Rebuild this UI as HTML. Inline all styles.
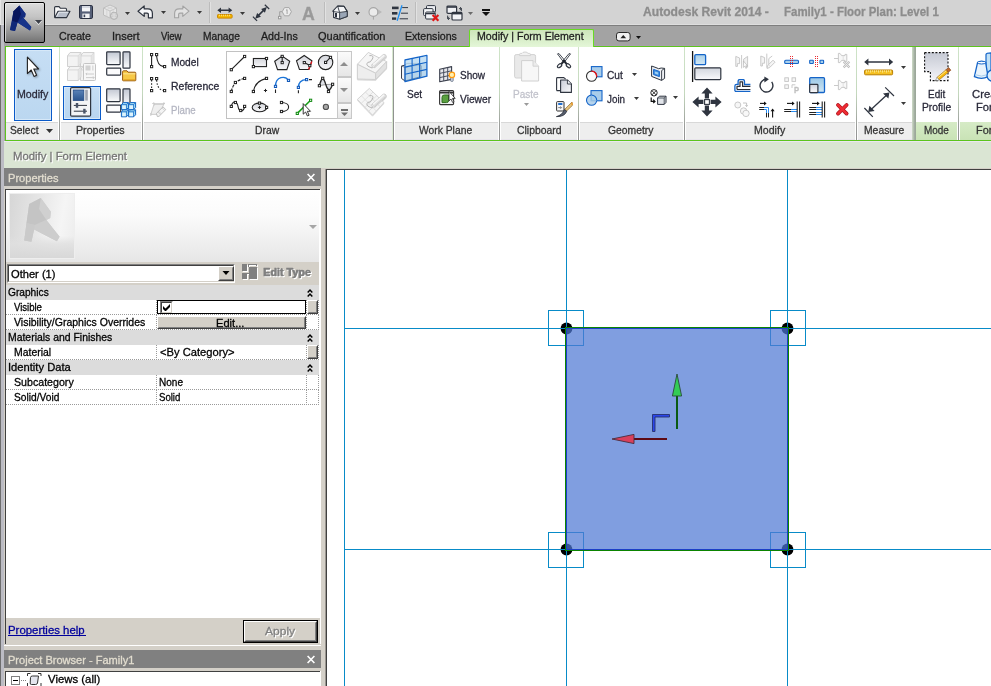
<!DOCTYPE html>
<html>
<head>
<meta charset="utf-8">
<title>Autodesk Revit 2014 - Family1 - Floor Plan: Level 1</title>
<style>
*{box-sizing:border-box;margin:0;padding:0}
html,body{width:991px;height:686px;overflow:hidden;background:#d4d0c8}
body{font-family:"Liberation Sans",sans-serif;font-size:12px;color:#1e1e1e;position:relative}
.a{position:absolute}
.t{position:absolute;white-space:nowrap;-webkit-text-stroke:0.3px currentColor}
svg{overflow:visible}
</style>
</head>
<body>
<div class="a" style="left:0px;top:0px;width:991px;height:25px;background:#d3d3d3;border-bottom:1px solid #dedede;"></div>
<div class="a" style="left:0px;top:25px;width:991px;height:21px;background:#a3a3a3;border-top:1px solid #7e7e7e;border-bottom:1px solid #aaa0ac;"></div>
<div class="a" style="left:0px;top:25px;width:1px;height:661px;background:#6e6e6e;"></div>
<div class="a" style="left:1px;top:25px;width:3px;height:661px;background:#bcbcc4;"></div>
<div class="a" style="left:0px;top:0px;width:1px;height:25px;background:#e6e6e6;"></div>
<div class="a" style="left:4px;top:46px;width:1px;height:96px;background:#a6a6a8;"></div>
<div class="a" style="left:5px;top:46px;width:990px;height:95px;background:#fff;border:1px solid #5cc41e;"></div>
<div class="a" style="left:4px;top:141px;width:987px;height:1px;background:#ebe8f0;"></div>
<div class="a" style="left:6px;top:122px;width:985px;height:18px;background:#eeeeee;border-top:1px solid #d8d8d8;border-bottom:1px solid #e8e4ec;"></div>
<div class="a" style="left:916px;top:122px;width:42px;height:18px;background:linear-gradient(#d6ebc6,#c9e3b6);"></div>
<div class="a" style="left:960px;top:122px;width:40px;height:18px;background:linear-gradient(#d6ebc6,#c9e3b6);"></div>
<div class="a" style="left:4px;top:142px;width:987px;height:26px;background:#dae5d3;"></div>
<div class="a" style="left:469px;top:29px;width:125px;height:18px;background:linear-gradient(#cde5ba 0%,#d8eec8 50%,#e4f6d8 100%);border:1px solid #68dc22;border-bottom:0;border-radius:2px 2px 0 0;"></div>
<div class="t" style="left:58.60px;top:29.00px;font-size:11.5px;line-height:15.5px;letter-spacing:0.000px;color:#1e1e1e;transform-origin:0 0;transform:scaleX(0.9257);">Create</div>
<div class="t" style="left:111.60px;top:29.00px;font-size:11.5px;line-height:15.5px;letter-spacing:0.000px;color:#1e1e1e;transform-origin:0 0;transform:scaleX(0.9600);">Insert</div>
<div class="t" style="left:161.00px;top:29.00px;font-size:11.5px;line-height:15.5px;letter-spacing:-0.079px;color:#1e1e1e;transform-origin:0 0;transform:scaleX(0.8400);">View</div>
<div class="t" style="left:203.00px;top:29.00px;font-size:11.5px;line-height:15.5px;letter-spacing:0.000px;color:#1e1e1e;transform-origin:0 0;transform:scaleX(0.8881);">Manage</div>
<div class="t" style="left:260.90px;top:29.00px;font-size:11.5px;line-height:15.5px;letter-spacing:0.000px;color:#1e1e1e;transform-origin:0 0;transform:scaleX(0.9275);">Add-Ins</div>
<div class="t" style="left:318.20px;top:29.00px;font-size:11.5px;line-height:15.5px;letter-spacing:0.000px;color:#1e1e1e;transform-origin:0 0;transform:scaleX(0.9600);">Quantification</div>
<div class="t" style="left:405.30px;top:29.00px;font-size:11.5px;line-height:15.5px;letter-spacing:0.000px;color:#1e1e1e;transform-origin:0 0;transform:scaleX(0.9214);">Extensions</div>
<div class="t" style="left:477.30px;top:29.00px;font-size:11.5px;line-height:15.5px;letter-spacing:0.000px;color:#1e1e1e;transform-origin:0 0;transform:scaleX(0.9233);">Modify | Form Element</div>
<div class="t" style="left:642.90px;top:4.00px;font-size:12.5px;line-height:16.5px;letter-spacing:0.000px;color:#8c8c8c;font-weight:bold;transform-origin:0 0;transform:scaleX(0.9685);">Autodesk Revit 2014 -</div>
<div class="t" style="left:784.30px;top:4.00px;font-size:12.5px;line-height:16.5px;letter-spacing:0.000px;color:#8c8c8c;font-weight:bold;transform-origin:0 0;transform:scaleX(0.9172);">Family1 - Floor Plan: Level 1</div>
<div class="a" style="left:58px;top:47px;width:3px;height:93px;background:#fff;"></div>
<div class="a" style="left:59px;top:47px;width:1px;height:93px;background:linear-gradient(#cfe4c8 0%,#c4d8bd 50%,#9a9c9a 85%,#929292 100%);"></div>
<div class="a" style="left:141px;top:47px;width:3px;height:93px;background:#fff;"></div>
<div class="a" style="left:142px;top:47px;width:1px;height:93px;background:linear-gradient(#cfe4c8 0%,#c4d8bd 50%,#9a9c9a 85%,#929292 100%);"></div>
<div class="a" style="left:498px;top:47px;width:3px;height:93px;background:#fff;"></div>
<div class="a" style="left:499px;top:47px;width:1px;height:93px;background:linear-gradient(#cfe4c8 0%,#c4d8bd 50%,#9a9c9a 85%,#929292 100%);"></div>
<div class="a" style="left:577px;top:47px;width:3px;height:93px;background:#fff;"></div>
<div class="a" style="left:578px;top:47px;width:1px;height:93px;background:linear-gradient(#cfe4c8 0%,#c4d8bd 50%,#9a9c9a 85%,#929292 100%);"></div>
<div class="a" style="left:683px;top:47px;width:3px;height:93px;background:#fff;"></div>
<div class="a" style="left:684px;top:47px;width:1px;height:93px;background:linear-gradient(#cfe4c8 0%,#c4d8bd 50%,#9a9c9a 85%,#929292 100%);"></div>
<div class="a" style="left:855px;top:47px;width:3px;height:93px;background:#fff;"></div>
<div class="a" style="left:856px;top:47px;width:1px;height:93px;background:linear-gradient(#cfe4c8 0%,#c4d8bd 50%,#9a9c9a 85%,#929292 100%);"></div>
<div class="a" style="left:957px;top:47px;width:3px;height:93px;background:#fff;"></div>
<div class="a" style="left:958px;top:47px;width:1px;height:93px;background:linear-gradient(#cfe4c8 0%,#c4d8bd 50%,#9a9c9a 85%,#929292 100%);"></div>
<div class="a" style="left:392px;top:47px;width:3px;height:93px;background:#fff;"></div>
<div class="a" style="left:393px;top:47px;width:1px;height:93px;background:linear-gradient(#9aa09a,#8c8c8c);"></div>
<div class="a" style="left:392px;top:47px;width:1px;height:93px;background:#d8e8d0;"></div>
<div class="a" style="left:912px;top:47px;width:4px;height:93px;background:linear-gradient(90deg,#cfdcc8,#a4b0a2 60%,#98a496);"></div>
<div class="t" style="left:10.30px;top:123.00px;font-size:11.5px;line-height:15.5px;letter-spacing:0.000px;color:#333;transform-origin:0 0;transform:scaleX(0.8909);">Select</div>
<div class="t" style="left:76.40px;top:123.00px;font-size:11.5px;line-height:15.5px;letter-spacing:0.000px;color:#333;transform-origin:0 0;transform:scaleX(0.9283);">Properties</div>
<div class="t" style="left:255.30px;top:123.00px;font-size:11.5px;line-height:15.5px;letter-spacing:0.000px;color:#333;transform-origin:0 0;transform:scaleX(0.9000);">Draw</div>
<div class="t" style="left:418.70px;top:123.00px;font-size:11.5px;line-height:15.5px;letter-spacing:0.000px;color:#333;transform-origin:0 0;transform:scaleX(0.8967);">Work Plane</div>
<div class="t" style="left:516.60px;top:123.00px;font-size:11.5px;line-height:15.5px;letter-spacing:0.000px;color:#333;transform-origin:0 0;transform:scaleX(0.9061);">Clipboard</div>
<div class="t" style="left:608.00px;top:123.00px;font-size:11.5px;line-height:15.5px;letter-spacing:0.000px;color:#333;transform-origin:0 0;transform:scaleX(0.9000);">Geometry</div>
<div class="t" style="left:753.70px;top:123.00px;font-size:11.5px;line-height:15.5px;letter-spacing:0.000px;color:#333;transform-origin:0 0;transform:scaleX(0.9206);">Modify</div>
<div class="t" style="left:863.50px;top:123.00px;font-size:11.5px;line-height:15.5px;letter-spacing:0.000px;color:#333;transform-origin:0 0;transform:scaleX(0.9000);">Measure</div>
<div class="t" style="left:923.70px;top:123.00px;font-size:11.5px;line-height:15.5px;letter-spacing:0.000px;color:#333;transform-origin:0 0;transform:scaleX(0.8655);">Mode</div>
<div class="t" style="left:975.50px;top:123.00px;font-size:11.5px;line-height:15.5px;letter-spacing:0.000px;color:#333;transform-origin:0 0;transform:scaleX(0.9444);">Form</div>
<svg class="a" style="left:46px;top:129px;" width="8" height="5" viewBox="0 0 8 5"><path d="M0 0h7l-3.5 4z" fill="#333"/></svg>
<div class="t" style="left:13.50px;top:150.00px;font-size:11.5px;line-height:15.5px;letter-spacing:0.000px;color:#fff;transform-origin:0 0;transform:scaleX(0.9871);">Modify | Form Element</div>
<div class="t" style="left:12.50px;top:149.00px;font-size:11.5px;line-height:15.5px;letter-spacing:0.000px;color:#757575;transform-origin:0 0;transform:scaleX(0.9871);">Modify | Form Element</div>
<div class="a" style="left:4px;top:2px;width:41px;height:41px;background:linear-gradient(#dcdcdc 0%,#c4c4c4 35%,#8e8e8e 80%,#747474 100%);border:1px solid #000;border-radius:2px;box-shadow:inset 1px 1px 0 #f0f0f0aa;"></div>
<svg class="a" style="left:4px;top:2px;" width="42" height="41" viewBox="0 0 42 41"><path d="M15.4 3.6L21.6 11.7L21 15.2L19 15.5L27.3 24.9L26 28.6L13.5 20.5L11 29L6 28L9.5 9.3z" fill="#122a7c"/><path d="M15.4 3.6L9.5 9.3L8 19L13.5 20.5L17 12z" fill="#08165c"/><path d="M15.4 3.6L21.6 11.7L21 15.2L19 15.5L17 12z" fill="#142d80"/><path d="M8 19L13.5 20.5L11 29L6 28z" fill="#102878"/><path d="M13.5 20.5L19 15.5L27.3 24.9L26 28.6z" fill="#17348a"/><path d="M31 19h7l-3.5 4z" fill="#f2f2f2"/><path d="M31 18h7l-3.5 4z" fill="#3c3f48"/></svg>
<svg class="a" style="left:54px;top:6px;" width="17" height="13" viewBox="0 0 17 13"><path d="M0.6 11.4V1.6q0-1 1-1H5l1.3 1.6h5.2q1 0 1 1V5" fill="#fafafa" stroke="#2f3540" stroke-width="1.1"/><path d="M0.8 11.6L4 5.2h12L12.6 11.6z" fill="#b9c0cc" stroke="#2f3540" stroke-width="1.1" stroke-linejoin="round"/><path d="M2.6 10.6L5 6.2h9.2" fill="none" stroke="#eef0f4" stroke-width="0.9"/></svg>
<svg class="a" style="left:79px;top:5px;" width="14" height="14" viewBox="0 0 14 14"><rect x="0.5" y="0.5" width="13" height="13" rx="1.3" fill="#566078" stroke="#2b3142"/><rect x="3" y="1" width="8" height="5.4" fill="#f4f5f8"/><rect x="3" y="1" width="8" height="2" fill="#d5d9e2"/><rect x="3.4" y="8.6" width="7.2" height="4.4" fill="#f2f3f6"/><rect x="4.6" y="9.6" width="1.6" height="2.6" fill="#3a4256"/></svg>
<svg class="a" style="left:102px;top:4px;" width="17" height="17" viewBox="0 0 17 17"><path d="M8 1L14.5 4V11L8 14L1.5 11V4z" fill="#e6e6e6" stroke="#bdbdbd"/><path d="M1.5 4L8 7L14.5 4M8 7V14" fill="none" stroke="#c4c4c4"/><path d="M4.7 2.5L11.2 5.5V12.4M11.3 2.5L4.8 5.5V12.4" fill="none" stroke="#d0d0d0" stroke-width=".8"/><circle cx="12" cy="11.8" r="3.6" fill="#c9c9c9" stroke="#b2b2b2"/><path d="M9 11.8h6M12 8.6v6.4M9.8 9.8q2.2 1.2 4.4 0M9.8 13.8q2.2-1.2 4.4 0" stroke="#e4e4e4" stroke-width=".7" fill="none"/></svg>
<svg class="a" style="left:125px;top:12px;" width="6" height="4" viewBox="0 0 6 4"><path d="M0 0h5l-2.5 3z" fill="#3a3a3a"/></svg>
<svg class="a" style="left:137px;top:5px;" width="17" height="14" viewBox="0 0 17 14"><path d="M1 6.2L7.2 1v2.9h3.6q4.6 0 4.6 4.6v4.3h-4V9.5q0-1.4-1.4-1.4H7.2V11.4z" fill="#f6f7f9" stroke="#2f3540" stroke-width="1.2" stroke-linejoin="round"/></svg>
<svg class="a" style="left:161px;top:11px;" width="6" height="4" viewBox="0 0 6 4"><path d="M0 0h5l-2.5 3z" fill="#3a3a3a"/></svg>
<svg class="a" style="left:173px;top:5px;" width="17" height="14" viewBox="0 0 17 14"><path d="M16 6.2L9.8 1v2.9H6.2q-4.6 0-4.6 4.6v4.3h4V9.5q0-1.4 1.4-1.4h2.8V11.4z" fill="#e2e2e2" stroke="#a4a4a4" stroke-width="1.1" stroke-linejoin="round"/></svg>
<svg class="a" style="left:197px;top:11px;" width="6" height="4" viewBox="0 0 6 4"><path d="M0 0h5l-2.5 3z" fill="#3a3a3a"/></svg>
<div class="a" style="left:209px;top:2px;width:1px;height:21px;background:#bcbcbc;"></div>
<div class="a" style="left:210px;top:2px;width:1px;height:21px;background:#e2e2e2;"></div>
<svg class="a" style="left:217px;top:6px;" width="16" height="13" viewBox="0 0 16 13"><path d="M0.3 4.3L4 1.6V3.6H11.6V1.6L15.3 4.3L11.6 7V5H4V7z" fill="#2f3540"/><rect x="0.5" y="8.5" width="14.6" height="3.6" rx="0.8" fill="#f5b800" stroke="#c98700"/><path d="M2.5 8.6v1.6M4.5 8.6v1.6M6.5 8.6v1.6M8.5 8.6v1.6M10.5 8.6v1.6M12.5 8.6v1.6" stroke="#fbe38a" stroke-width=".8"/></svg>
<svg class="a" style="left:240px;top:12px;" width="6" height="4" viewBox="0 0 6 4"><path d="M0 0h5l-2.5 3z" fill="#3a3a3a"/></svg>
<svg class="a" style="left:252px;top:4px;" width="18" height="18" viewBox="0 0 18 18"><path d="M5 12.9L13 4.9" stroke="#2f3540" stroke-width="1.6"/><path d="M3.20 14.65L8.93 12.76L5.13 8.93zM14.85 3.05L12.92 8.77L9.12 4.94z" fill="#2f3540"/><path d="M0.9 12.7L5.1 16.9M12.8 0.8L17.2 5" stroke="#2f3540" stroke-width="1.2"/></svg>
<svg class="a" style="left:278px;top:5px;" width="15" height="15" viewBox="0 0 15 15"><path d="M4.2 6.7L6.5 2.6H11.1L13.4 6.7L11.1 10.8H6.5z" fill="#ececec" stroke="#a8a8a8"/><path d="M8 5.4L9.1 4.6V9" stroke="#9c9c9c" stroke-width=".9" fill="none"/><path d="M4.2 6.7H1.7V11.4" stroke="#a0a0a0" fill="none"/><rect x="0.5" y="11.4" width="2.4" height="2.4" fill="#f4f4f4" stroke="#9a9a9a"/></svg>
<div class="t" style="left:302.20px;top:3.00px;font-size:18px;line-height:22px;letter-spacing:0.000px;color:#9a9a9a;font-weight:bold;transform-origin:0 0;transform:scaleX(0.9846);">A</div>
<div class="a" style="left:324px;top:2px;width:1px;height:21px;background:#bcbcbc;"></div>
<div class="a" style="left:325px;top:2px;width:1px;height:21px;background:#e2e2e2;"></div>
<svg class="a" style="left:332px;top:5px;" width="16" height="15" viewBox="0 0 16 15"><path d="M0.8 6.2L5.6 1L12 1.2L15.2 6.4V11.4L7.6 14.2L1.6 12.4V6.6z" fill="#f4f5f7" stroke="#2f3540" stroke-width="1.1" stroke-linejoin="round"/><path d="M7.6 7.4L15.2 6.4V11.4L7.6 14.2z" fill="#9aa6b6" stroke="#2f3540" stroke-width=".9"/><path d="M5.6 1L7.6 7.4L1.2 6.6M5.6 1L12 1.2L15.2 6.4" fill="none" stroke="#2f3540" stroke-width=".9"/><path d="M3 8h2v4.6l-2-.6z" fill="#2f3540"/></svg>
<svg class="a" style="left:355px;top:12px;" width="6" height="4" viewBox="0 0 6 4"><path d="M0 0h5l-2.5 3z" fill="#3a3a3a"/></svg>
<svg class="a" style="left:368px;top:6px;" width="15" height="15" viewBox="0 0 15 15"><path d="M8.6 2.4L14 6L8.6 9.6z" fill="#b9b9b9"/><circle cx="5.4" cy="6" r="4.4" fill="#ebebeb" stroke="#a6a6a6" stroke-width="1.1"/><path d="M5.4 10.4V13.6" stroke="#a6a6a6"/></svg>
<svg class="a" style="left:391px;top:5px;" width="18" height="16" viewBox="0 0 18 16"><rect x="1" y="1.6" width="6.6" height="2.6" fill="#2f3540"/><rect x="1" y="7" width="5.4" height="2.6" fill="#2f3540"/><rect x="1" y="12.4" width="4.2" height="2.4" fill="#2f3540"/><path d="M11.2 2.6H17M10 8.2H17M8.6 13.8H17" stroke="#2f3540" stroke-width="1"/><path d="M11 0.2L6.2 15.8" stroke="#1b8ef2" stroke-width="1.3"/></svg>
<div class="a" style="left:415px;top:2px;width:1px;height:21px;background:#bcbcbc;"></div>
<div class="a" style="left:416px;top:2px;width:1px;height:21px;background:#e2e2e2;"></div>
<svg class="a" style="left:423px;top:5px;" width="17" height="17" viewBox="0 0 17 17"><rect x="3.5" y="0.6" width="9" height="6.4" rx="1" fill="#eceef2" stroke="#2f3540"/><rect x="0.6" y="3.6" width="9.4" height="7" rx="1" fill="#f4f5f8" stroke="#2f3540"/><rect x="2.6" y="7" width="9.6" height="7" rx="1" fill="#f2f3f6" stroke="#2f3540"/><path d="M3 8.6h9" stroke="#2f3540" stroke-width="1.4"/><path d="M9.6 10L15.4 15.8M15.4 10L9.6 15.8" stroke="#e01818" stroke-width="2.2"/></svg>
<svg class="a" style="left:446px;top:5px;" width="18" height="16" viewBox="0 0 18 16"><rect x="1" y="1" width="9.6" height="7.4" rx="1" fill="#f0f1f4" stroke="#2f3540" stroke-width="1.2"/><path d="M1 2h9.6" stroke="#2f3540" stroke-width="1.6"/><rect x="6" y="7.4" width="10" height="7.6" rx="1" fill="#f4f5f8" stroke="#2f3540" stroke-width="1.2"/><path d="M6 8.6h10" stroke="#2f3540" stroke-width="1.6"/><path d="M13 3.6h2.4v2.6M14.2 2l1.2 1.6L14.2 5.2" fill="none" stroke="#2f3540" stroke-width=".9"/><path d="M4 13.4H1.6V10.6M2.8 15L1.6 13.4L2.8 11.8" fill="none" stroke="#2f3540" stroke-width=".9"/></svg>
<svg class="a" style="left:468px;top:12px;" width="6" height="4" viewBox="0 0 6 4"><path d="M0 0h5l-2.5 3z" fill="#6a6a6a"/></svg>
<div class="a" style="left:482px;top:9px;width:8px;height:2px;background:#111;"></div>
<svg class="a" style="left:482px;top:12px;" width="8" height="4" viewBox="0 0 8 4"><path d="M0 0h8l-4 4z" fill="#111"/></svg>
<svg class="a" style="left:616px;top:32px;" width="15" height="10" viewBox="0 0 15 10"><rect x="0.5" y="0.5" width="13.6" height="8.4" rx="2.4" fill="#f0f0f0" stroke="#2a2a2a"/><path d="M4.4 6.2h5.8l-2.9-3.2z" fill="#222"/></svg>
<svg class="a" style="left:636px;top:36px;" width="5" height="3" viewBox="0 0 5 3"><path d="M0 0h5l-2.5 3z" fill="#111"/></svg>
<div class="a" style="left:14px;top:49px;width:38px;height:72px;background:linear-gradient(#c6def4,#bbd7f0);border:1px solid #0a5ac8;box-shadow:inset 0 0 0 1px #d6e8f8;"></div>
<svg class="a" style="left:26px;top:56px;filter:drop-shadow(1px 1px 1px #0005);" width="14" height="22" viewBox="0 0 14 22"><path d="M1.4 1.2V17.6L5.2 14L8 20.4L10.6 19.2L7.8 13H12.6z" fill="#fff" stroke="#222" stroke-width="1.1" stroke-linejoin="round"/></svg>
<div class="t" style="left:16.60px;top:87.00px;font-size:11.5px;line-height:15.5px;letter-spacing:0.000px;color:#2a2a3a;transform-origin:0 0;transform:scaleX(0.9235);">Modify</div>
<svg class="a" style="left:67px;top:52px;" width="30" height="30" viewBox="0 0 30 30"><g transform="translate(13.5,0.5)"><path d="M0 3.4L2.6 0H13.4V10.6L10.8 14H0z" fill="#f3f3f3" stroke="#cccccc" stroke-width=".9"/><path d="M0 3.4H10.8V14M10.8 3.4L13.4 0" fill="none" stroke="#d2d2d2" stroke-width=".8"/><path d="M11.2 3.6L13 1.2V10.4L11.2 13z" fill="#e4e4e4"/></g><g transform="translate(0.5,0.5)"><path d="M0 3.4L2.6 0H13.4V10.6L10.8 14H0z" fill="#f3f3f3" stroke="#cccccc" stroke-width=".9"/><path d="M0 3.4H10.8V14M10.8 3.4L13.4 0" fill="none" stroke="#d2d2d2" stroke-width=".8"/><path d="M11.2 3.6L13 1.2V10.4L11.2 13z" fill="#e4e4e4"/></g><g transform="translate(13.5,14.5)"><path d="M0 3.4L2.6 0H13.4V10.6L10.8 14H0z" fill="#f3f3f3" stroke="#cccccc" stroke-width=".9"/><path d="M0 3.4H10.8V14M10.8 3.4L13.4 0" fill="none" stroke="#d2d2d2" stroke-width=".8"/><path d="M11.2 3.6L13 1.2V10.4L11.2 13z" fill="#e4e4e4"/></g><g transform="translate(0.5,14.5)"><path d="M0 3.4L2.6 0H13.4V10.6L10.8 14H0z" fill="#f3f3f3" stroke="#cccccc" stroke-width=".9"/><path d="M0 3.4H10.8V14M10.8 3.4L13.4 0" fill="none" stroke="#d2d2d2" stroke-width=".8"/><path d="M11.2 3.6L13 1.2V10.4L11.2 13z" fill="#e4e4e4"/></g><rect x="16.5" y="11.5" width="12" height="17" rx="1" fill="#f7f7f7" stroke="#c4c4c4"/><rect x="18.5" y="13.5" width="5" height="5" fill="#d2d2d2"/><rect x="25" y="13.5" width="1.6" height="5" fill="#dcdcdc"/><path d="M19 22h8M19 25.6h8" stroke="#c6c6c6" stroke-width=".9"/><path d="M20 20.8L18.8 22L20 23.2M26 24.4L27.2 25.6L26 26.8" stroke="#c0c0c0" fill="none" stroke-width=".8"/></svg>
<svg class="a" style="left:106px;top:51px;" width="31" height="31" viewBox="0 0 31 31"><defs><linearGradient id="pg" x1="0" y1="0" x2="0" y2="1"><stop offset="0" stop-color="#c2c7d2"/><stop offset="1" stop-color="#fafbfc"/></linearGradient></defs><rect x="17" y="0.8" width="7" height="16.4" rx=".8" fill="url(#pg)" stroke="#2f3540" stroke-width="1.2"/><rect x="0.7" y="0.8" width="13.4" height="12.8" rx=".8" fill="url(#pg)" stroke="#2f3540" stroke-width="1.2"/><rect x="0.7" y="17.2" width="14" height="6.9" rx=".8" fill="#fbfbfc" stroke="#2f3540" stroke-width="1.2"/><path d="M16.6 29.2V20.6q0-.8.8-.8h3.6l1 1.4h7q.8 0 .8.8V29.2q0 .6-.8.6H17.4q-.8 0-.8-.6z" fill="#f7c948" stroke="#9a5a10" stroke-width="1"/><path d="M17.2 22.8H29.4" stroke="#fbe28c" stroke-width="1.2"/><path d="M17.4 28.8H29.2" stroke="#e0a020" stroke-width="1"/></svg>
<div class="a" style="left:63px;top:86px;width:38px;height:34px;background:linear-gradient(#c6def4,#b8d5f0);border:1px solid #0a5ac8;box-shadow:inset 0 0 0 1px #d6e8f8;"></div>
<svg class="a" style="left:70px;top:87px;" width="22" height="30" viewBox="0 0 22 30"><rect x="0.6" y="0.6" width="20" height="28.6" rx="1.2" fill="#f3f4f6" stroke="#2f3540" stroke-width="1.2"/><defs><linearGradient id="bq" x1="0" y1="0" x2="0" y2="1"><stop offset="0" stop-color="#5b83b8"/><stop offset="1" stop-color="#2c558f"/></linearGradient></defs><rect x="3.2" y="3" width="10.6" height="10.4" fill="url(#bq)" stroke="#244a84" stroke-width=".8"/><rect x="15.2" y="2.8" width="2.6" height="10.8" fill="#a0a5b0"/><path d="M3.8 18.4H17M3.8 24.2H17" stroke="#2f3540" stroke-width="1"/><rect x="5.8" y="16" width="2.4" height="4.8" fill="#4a5468"/><rect x="13.2" y="21.8" width="2.4" height="4.8" fill="#4a5468"/></svg>
<svg class="a" style="left:106px;top:88px;" width="31" height="31" viewBox="0 0 31 31"><defs><linearGradient id="pg" x1="0" y1="0" x2="0" y2="1"><stop offset="0" stop-color="#c2c7d2"/><stop offset="1" stop-color="#fafbfc"/></linearGradient></defs><rect x="17" y="0.8" width="7" height="16.4" rx=".8" fill="url(#pg)" stroke="#2f3540" stroke-width="1.2"/><rect x="0.7" y="0.8" width="13.4" height="12.8" rx=".8" fill="url(#pg)" stroke="#2f3540" stroke-width="1.2"/><rect x="0.7" y="17.2" width="14" height="6.9" rx=".8" fill="#fbfbfc" stroke="#2f3540" stroke-width="1.2"/><g transform="translate(22.6,14.6)"><path d="M0 2L2 0H7V5L5 7H0z" fill="#a6def6" stroke="#1266c4" stroke-width="1"/><path d="M0 2H5V7M5 2L7 0" fill="none" stroke="#1266c4" stroke-width=".8"/><path d="M1 3h3.4v3.4H1z" fill="#dff3fc"/></g><g transform="translate(15.4,14.6)"><path d="M0 2L2 0H7V5L5 7H0z" fill="#a6def6" stroke="#1266c4" stroke-width="1"/><path d="M0 2H5V7M5 2L7 0" fill="none" stroke="#1266c4" stroke-width=".8"/><path d="M1 3h3.4v3.4H1z" fill="#dff3fc"/></g><g transform="translate(22.6,21.8)"><path d="M0 2L2 0H7V5L5 7H0z" fill="#a6def6" stroke="#1266c4" stroke-width="1"/><path d="M0 2H5V7M5 2L7 0" fill="none" stroke="#1266c4" stroke-width=".8"/><path d="M1 3h3.4v3.4H1z" fill="#dff3fc"/></g><g transform="translate(15.4,21.8)"><path d="M0 2L2 0H7V5L5 7H0z" fill="#a6def6" stroke="#1266c4" stroke-width="1"/><path d="M0 2H5V7M5 2L7 0" fill="none" stroke="#1266c4" stroke-width=".8"/><path d="M1 3h3.4v3.4H1z" fill="#dff3fc"/></g></svg>
<svg class="a" style="left:150px;top:53px;" width="17" height="16" viewBox="0 0 17 16"><path d="M1.6 3V13" stroke="#222" stroke-width="1.1"/><path d="M6.6 3Q7.4 12.6 13 13.4" fill="none" stroke="#222" stroke-width="1.1"/><rect x="0.50" y="0.50" width="2.2" height="2.2" fill="#fff" stroke="#222" stroke-width="1"/><rect x="0.50" y="12.50" width="2.2" height="2.2" fill="#fff" stroke="#222" stroke-width="1"/><rect x="5.50" y="0.50" width="2.2" height="2.2" fill="#fff" stroke="#222" stroke-width="1"/><rect x="13.50" y="12.50" width="2.2" height="2.2" fill="#fff" stroke="#222" stroke-width="1"/></svg>
<div class="t" style="left:170.80px;top:55.00px;font-size:11.5px;line-height:15.5px;letter-spacing:0.000px;color:#2a2a3a;transform-origin:0 0;transform:scaleX(0.8839);">Model</div>
<svg class="a" style="left:150px;top:77px;" width="17" height="16" viewBox="0 0 17 16"><path d="M1.6 3V13" stroke="#222" stroke-width="1.1" stroke-dasharray="1.6 1.6"/><path d="M6.6 3Q7.4 12.6 13 13.4" fill="none" stroke="#222" stroke-width="1.1" stroke-dasharray="1.6 1.6"/><rect x="0.50" y="0.50" width="2.2" height="2.2" fill="#fff" stroke="#222" stroke-width="1"/><rect x="0.50" y="12.50" width="2.2" height="2.2" fill="#fff" stroke="#222" stroke-width="1"/><rect x="5.50" y="0.50" width="2.2" height="2.2" fill="#fff" stroke="#222" stroke-width="1"/><rect x="13.50" y="12.50" width="2.2" height="2.2" fill="#fff" stroke="#222" stroke-width="1"/></svg>
<div class="t" style="left:170.80px;top:79.00px;font-size:11.5px;line-height:15.5px;letter-spacing:0.000px;color:#2a2a3a;transform-origin:0 0;transform:scaleX(0.9111);">Reference</div>
<svg class="a" style="left:150px;top:102px;" width="17" height="16" viewBox="0 0 17 16"><path d="M4 2.4H13.6L10 12.4H0.8z" fill="#efefef" stroke="#c8c8c8" stroke-width=".9"/><path d="M4 0.6V3.6M13.6 0.6V3M0.8 11v3M2.6 1.6H15M2.4 1.6l1.2-.9M15 1.6l-1.2-.9" stroke="#c4c4c4" stroke-width=".8" fill="none"/><path d="M7.4 14.6L6.4 11.4L13 4.8L15.8 7.6L9.2 14.2z" fill="#f4f4f4" stroke="#b8b8b8" stroke-width=".9"/><path d="M7.8 10L10.6 12.8M8.6 9.2L11.4 12M12 5.8L14.8 8.6" stroke="#c4c4c4" stroke-width=".7"/></svg>
<div class="t" style="left:170.80px;top:103.00px;font-size:11.5px;line-height:15.5px;letter-spacing:-0.000px;color:#b4b6c2;transform-origin:0 0;transform:scaleX(0.8400);">Plane</div>
<div class="a" style="left:226px;top:51px;width:126px;height:68px;background:#fff;border:1px solid #c2c2c2;"></div>
<svg class="a" style="left:226px;top:51px;" width="126" height="68" viewBox="0 0 126 68"><path d="M5.30 18.70L18.60 5.50" fill="none" stroke="#222" stroke-width="1.1" /><rect x="4.20" y="17.60" width="2.2" height="2.2" fill="#fff" stroke="#222" stroke-width="1"/><rect x="17.50" y="4.40" width="2.2" height="2.2" fill="#fff" stroke="#222" stroke-width="1"/><defs><linearGradient id="rg" x1="0" y1="0" x2="0" y2="1"><stop offset="0" stop-color="#d4d6dc"/><stop offset="1" stop-color="#f6f6f8"/></linearGradient></defs><rect x="27.400000000000006" y="7.5" width="13.1" height="8.1" fill="url(#rg)" stroke="#222" stroke-width="1.1"/><rect x="26.30" y="14.50" width="2.2" height="2.2" fill="#fff" stroke="#222" stroke-width="1"/><rect x="39.40" y="6.40" width="2.2" height="2.2" fill="#fff" stroke="#222" stroke-width="1"/><path d="M56.20 5.09L63.71 10.28L60.84 18.67L51.56 18.67L48.69 10.28z" fill="url(#rg)" stroke="#222" stroke-width="1.1"/><path d="M56.20 5.40L56.20 11.60" fill="none" stroke="#222" stroke-width="1.1" /><rect x="55.10" y="4.30" width="2.2" height="2.2" fill="#fff" stroke="#222" stroke-width="1"/><rect x="55.10" y="10.50" width="2.2" height="2.2" fill="#fff" stroke="#222" stroke-width="1"/><path d="M78.20 4.51L85.90 9.82L82.96 18.43L73.44 18.43L70.50 9.82z" fill="url(#rg)" stroke="#222" stroke-width="1.1"/><path d="M85.80 10.60L82.60 18.60" fill="none" stroke="#e8141c" stroke-width="1.3" /><path d="M78.30 11.60L83.80 14.60" fill="none" stroke="#222" stroke-width="1.1" /><rect x="77.20" y="10.50" width="2.2" height="2.2" fill="#fff" stroke="#222" stroke-width="1"/><rect x="82.70" y="13.50" width="2.2" height="2.2" fill="#fff" stroke="#222" stroke-width="1"/><circle cx="99.60000000000002" cy="11.399999999999999" r="7.2" fill="url(#rg)" stroke="#222" stroke-width="1.1"/><path d="M99.60 11.40L104.50 6.40" fill="none" stroke="#222" stroke-width="1.1" /><rect x="98.50" y="10.30" width="2.2" height="2.2" fill="#fff" stroke="#222" stroke-width="1"/><rect x="103.40" y="5.30" width="2.2" height="2.2" fill="#fff" stroke="#222" stroke-width="1"/><path d="M5.30 40.50Q7.60 29.40 18.60 27.40" fill="none" stroke="#222" stroke-width="1.1" stroke-dasharray="3 1.2"/><rect x="4.20" y="39.40" width="2.2" height="2.2" fill="#fff" stroke="#222" stroke-width="1"/><rect x="8.30" y="30.40" width="2.2" height="2.2" fill="#fff" stroke="#222" stroke-width="1"/><rect x="17.50" y="26.30" width="2.2" height="2.2" fill="#fff" stroke="#222" stroke-width="1"/><path d="M27.40 40.50Q29.00 30.00 40.50 27.40" fill="none" stroke="#222" stroke-width="1.1" /><rect x="26.30" y="39.40" width="2.2" height="2.2" fill="#fff" stroke="#222" stroke-width="1"/><rect x="39.40" y="26.30" width="2.2" height="2.2" fill="#fff" stroke="#222" stroke-width="1"/><path d="M37.90 39.50H41.10000000000002M39.50 37.90V41.099999999999994" fill="none" stroke="#222" stroke-width="1" /><path d="M49.50 35.40C49.50 25.00 59.50 24.60 62.50 29.40" fill="none" stroke="#1a74d8" stroke-width="1.3" /><rect x="48.40" y="34.30" width="2.2" height="2.2" fill="#cfe4fa" stroke="#1258b8" stroke-width="1"/><rect x="61.40" y="28.30" width="2.2" height="2.2" fill="#cfe4fa" stroke="#1258b8" stroke-width="1"/><path d="M49.50 38.40V42" fill="none" stroke="#222" stroke-width="1.1" /><path d="M72.40 36.40Q72.40 28.80 80.60 28.60" fill="none" stroke="#1a74d8" stroke-width="1.3" /><rect x="71.30" y="35.30" width="2.2" height="2.2" fill="#cfe4fa" stroke="#1258b8" stroke-width="1"/><rect x="79.50" y="27.50" width="2.2" height="2.2" fill="#cfe4fa" stroke="#1258b8" stroke-width="1"/><path d="M72.40 39.20V42.2M83.00 28.60H86" fill="none" stroke="#222" stroke-width="1.1" /><path d="M96.70 27.30L93.40 34.70L100.00 33.50zM100.00 33.50L106.60 33.30L102.50 40.50z" fill="#dfe2e8" stroke="#666" stroke-width=".6"/><path d="M93.40 34.70C95.40 26.00 97.60 26.00 99.60 33.00S104.20 41.00 106.60 33.30" fill="none" stroke="#222" stroke-width="1.2" /><rect x="95.60" y="26.20" width="2.2" height="2.2" fill="#fff" stroke="#222" stroke-width="1"/><rect x="92.30" y="33.60" width="2.2" height="2.2" fill="#fff" stroke="#222" stroke-width="1"/><rect x="105.50" y="32.20" width="2.2" height="2.2" fill="#fff" stroke="#222" stroke-width="1"/><rect x="101.40" y="39.40" width="2.2" height="2.2" fill="#fff" stroke="#222" stroke-width="1"/><path d="M5.30 55.40C6.40 49.60 11.00 49.60 12.00 55.40S17.60 61.40 18.60 55.40" fill="none" stroke="#222" stroke-width="1.1" /><rect x="4.20" y="54.30" width="2.2" height="2.2" fill="#fff" stroke="#222" stroke-width="1"/><rect x="8.30" y="50.40" width="2.2" height="2.2" fill="#fff" stroke="#222" stroke-width="1"/><rect x="13.60" y="58.40" width="2.2" height="2.2" fill="#fff" stroke="#222" stroke-width="1"/><rect x="17.50" y="54.30" width="2.2" height="2.2" fill="#fff" stroke="#222" stroke-width="1"/><ellipse cx="33.5" cy="56.400000000000006" rx="7.3" ry="4.3" fill="url(#rg)" stroke="#222" stroke-width="1.1"/><path d="M31.90 56.40H35.10000000000002M33.50 54.80V58" fill="none" stroke="#222" stroke-width="1" /><rect x="32.40" y="51.00" width="2.2" height="2.2" fill="#fff" stroke="#222" stroke-width="1"/><rect x="39.50" y="55.30" width="2.2" height="2.2" fill="#fff" stroke="#222" stroke-width="1"/><path d="M55.50 51.50C65.00 51.50 65.00 60.50 55.50 60.50" fill="none" stroke="#222" stroke-width="1.1" /><rect x="54.40" y="50.40" width="2.2" height="2.2" fill="#fff" stroke="#222" stroke-width="1"/><rect x="54.40" y="59.40" width="2.2" height="2.2" fill="#fff" stroke="#222" stroke-width="1"/><path d="M71.30 62.40L84.60 49.30" fill="none" stroke="#1aa01a" stroke-width="1.6" /><rect x="70.20" y="61.30" width="2.2" height="2.2" fill="#e8f8e8" stroke="#138a13" stroke-width="1"/><rect x="83.50" y="48.20" width="2.2" height="2.2" fill="#e8f8e8" stroke="#138a13" stroke-width="1"/><path d="M77.20 52.60v10.6l2.4-2.2l1.8 4l1.7-.8l-1.8-3.9h3.2z" fill="#fff" stroke="#222" stroke-width=".9" stroke-linejoin="round"/><circle cx="99.89999999999998" cy="55.900000000000006" r="2.6" fill="#a8a8a8" stroke="#505050" stroke-width="1.1"/></svg>
<div class="a" style="left:337px;top:51px;width:15px;height:26px;background:linear-gradient(#fbfbfb,#e6e6e6);border:1px solid #c8c8c8;"></div>
<div class="a" style="left:337px;top:77px;width:15px;height:26px;background:linear-gradient(#fbfbfb,#e6e6e6);border:1px solid #c8c8c8;"></div>
<div class="a" style="left:337px;top:103px;width:15px;height:16px;background:linear-gradient(#fbfbfb,#e6e6e6);border:1px solid #c8c8c8;"></div>
<svg class="a" style="left:340px;top:62px;" width="8" height="4" viewBox="0 0 8 4"><path d="M0 4h8l-4-4z" fill="#8e8e8e"/></svg>
<svg class="a" style="left:340px;top:88px;" width="8" height="4" viewBox="0 0 8 4"><path d="M0 0h8l-4 4z" fill="#8e8e8e"/></svg>
<div class="a" style="left:341px;top:109px;width:7px;height:2px;background:#6e6e6e;"></div>
<svg class="a" style="left:341px;top:112px;" width="7" height="4" viewBox="0 0 7 4"><path d="M0 0.4h7l-3.5 3.6z" fill="#6e6e6e"/></svg>
<svg class="a" style="left:357px;top:52px;filter:drop-shadow(0.5px 1px 0.6px #0002);" width="30" height="28" viewBox="0 0 30 28"><path d="M0.4 12.3L11.3 0.4L29.6 9.6L18.6 21.2z" fill="#f6f6f6" stroke="#cdcdcd" stroke-width=".9" stroke-linejoin="round"/><path d="M0.4 12.3V27L18.6 27.5V21.2z" fill="#eeeeee" stroke="#cdcdcd" stroke-width=".9" stroke-linejoin="round"/><path d="M18.6 21.2L29.6 9.6V16L18.6 27.5z" fill="#e2e2e2" stroke="#cdcdcd" stroke-width=".9" stroke-linejoin="round"/><path d="M12.4 3.6q5-.6 3 3.4t-4.6 3.4q-2.4 2.6 1.4 4.4t3.4.6" fill="none" stroke="#b4b4b4" stroke-width="1"/><g transform="translate(14.6,2)"><path d="M0.4 10.6L11.6 0.6Q13.4 0 14.4 1.4Q15.2 2.8 14 4L3.2 13.6z" fill="#e4e4e4" stroke="#c4c4c4" stroke-width=".8"/><path d="M1.6 10.6L12.4 1.2" stroke="#f8f8f8" stroke-width="1.4"/><path d="M2.8 12.6L13.8 3" stroke="#cfcfcf" stroke-width="1"/><path d="M0.4 10.6Q-0.6 13.4 3.2 13.6" fill="#f4f4f4" stroke="#c0c0c0" stroke-width=".8"/></g></svg>
<svg class="a" style="left:357px;top:88px;filter:drop-shadow(0.5px 1px 0.6px #0002);" width="30" height="28" viewBox="0 0 30 28"><path d="M0.4 11.4L12.3 0.4L27 14.6L15.5 27.2z" fill="#f5f5f5" stroke="#cfcfcf" stroke-width=".9" stroke-linejoin="round"/><path d="M4.4 7.8L19.3 23M8.4 4L23.2 18.8M4.2 15.4L16 4M8 19.4L19.8 7.6M11.8 23.2L23.4 11.2" fill="none" stroke="#dcdcdc" stroke-width=".8"/><path d="M12.4 7.6q5-.6 3 3.4t-4.6 3.4q-2.4 2.6 1.4 4.4t3.4.6" fill="none" stroke="#b4b4b4" stroke-width="1"/><g transform="translate(14.6,5.6)"><path d="M0.4 10.6L11.6 0.6Q13.4 0 14.4 1.4Q15.2 2.8 14 4L3.2 13.6z" fill="#e4e4e4" stroke="#c4c4c4" stroke-width=".8"/><path d="M1.6 10.6L12.4 1.2" stroke="#f8f8f8" stroke-width="1.4"/><path d="M2.8 12.6L13.8 3" stroke="#cfcfcf" stroke-width="1"/><path d="M0.4 10.6Q-0.6 13.4 3.2 13.6" fill="#f4f4f4" stroke="#c0c0c0" stroke-width=".8"/></g></svg>
<svg class="a" style="left:401px;top:55px;" width="27" height="28" viewBox="0 0 27 28"><path d="M0.5 11L3.6 10.2L6 8.4H16.6Q19.6 8.4 20 11V21.6L4 26L0.5 23.4z" fill="#f4f5f7" stroke="#3a3f4a" stroke-width="1" stroke-linejoin="round"/><path d="M0.5 11L4 12.4V26" fill="none" stroke="#6a6f7a" stroke-width=".8"/><path d="M4 12.4L20 9.6" fill="none" stroke="#9aa0aa" stroke-width=".8"/><path d="M4 5L25.9 0.4V21.2L4 26.6z" fill="#8fc0e4" fill-opacity=".62" stroke="#1464c8" stroke-width="1.3" stroke-linejoin="round"/><path d="M4.6 5.6L25.3 1.2V7L4.6 11.6z" fill="#cfe8f8" fill-opacity=".6"/><path d="M11.1 3.6V25M18.6 2V23.2M4 12.1L25.9 7.3M4 19.2L25.9 14.4" stroke="#1464c8" stroke-width="1.1" fill="none"/></svg>
<div class="t" style="left:406.80px;top:87.00px;font-size:11.5px;line-height:15.5px;letter-spacing:0.000px;color:#2a2a3a;transform-origin:0 0;transform:scaleX(0.8778);">Set</div>
<svg class="a" style="left:439px;top:66px;" width="17" height="17" viewBox="0 0 17 17"><path d="M0.7 3.2L12.6 0.6V13.4L0.7 15.8z" fill="#e6e7ec" stroke="#3a3f4c" stroke-width="1.1" stroke-linejoin="round"/><path d="M4.7 2.4V15M8.7 1.5V14.2M0.7 7.4L12.6 4.8M0.7 11.6L12.6 9" stroke="#4a5060" stroke-width="1"/><rect x="11.6" y="11.4" width="2.6" height="4" rx=".8" fill="#c8d0e0" stroke="#5a6478" stroke-width=".7"/><circle cx="12.9" cy="8.9" r="2.7" fill="#fff0b0" stroke="#ff9a10" stroke-width="1.2"/></svg>
<div class="t" style="left:459.70px;top:68.00px;font-size:11.5px;line-height:15.5px;letter-spacing:0.000px;color:#2a2a3a;transform-origin:0 0;transform:scaleX(0.8724);">Show</div>
<svg class="a" style="left:439px;top:90px;" width="17" height="16" viewBox="0 0 17 16"><rect x="0.6" y="0.6" width="14" height="14" rx="1" fill="#f6f6f8" stroke="#333" stroke-width="1.1"/><path d="M0.6 2.6H14.6" stroke="#333" stroke-width="1.8"/><path d="M3 12.6V7.4q0-2.4 2.4-2.4H9.6V10.6q0 2-2 2z" fill="#5aa040" stroke="#2e6a1e" stroke-width="1"/><path d="M10 1.4v9.4l2-1.8l1.6 3.4l1.4-.6l-1.6-3.4h2.8z" fill="#fff" stroke="#222" stroke-width=".8" stroke-linejoin="round"/></svg>
<div class="t" style="left:459.70px;top:92.00px;font-size:11.5px;line-height:15.5px;letter-spacing:0.000px;color:#2a2a3a;transform-origin:0 0;transform:scaleX(0.8886);">Viewer</div>
<svg class="a" style="left:514px;top:52px;" width="26" height="30" viewBox="0 0 26 30"><rect x="0.6" y="2.6" width="21" height="23.4" rx="1.6" fill="#e9e9e9" stroke="#d2d2d2"/><path d="M5.6 3.6V2.4q0-1 1-1H8q.6-1.4 3-1.4t3 1.4h1.4q1 0 1 1V3.6z" fill="#f2f2f2" stroke="#cfcfcf" stroke-width=".9"/><path d="M7.6 8.6H19L24.6 14.2V29H7.6z" fill="#f7f7f7" stroke="#d0d0d0"/><path d="M19 8.6V14.2H24.6" fill="#ececec" stroke="#d0d0d0" stroke-width=".9"/></svg>
<div class="t" style="left:512.80px;top:87.00px;font-size:11.5px;line-height:15.5px;letter-spacing:0.000px;color:#c2c3cc;transform-origin:0 0;transform:scaleX(0.8733);">Paste</div>
<svg class="a" style="left:524px;top:103px;" width="6" height="4" viewBox="0 0 6 4"><path d="M0 0h5l-2.5 3z" fill="#9a9a9a"/></svg>
<svg class="a" style="left:557px;top:53px;" width="15" height="16" viewBox="0 0 15 16"><path d="M7 8.2L10.2 11.4M7 8.2L3.8 11.4" stroke="#1e222c" stroke-width="2"/><path d="M0.5 0.9L1.9 0.5L8.6 8.4L6.9 9.5z" fill="#fff" stroke="#2f3540" stroke-width=".9" stroke-linejoin="round"/><path d="M13.5 0.9L12.1 0.5L5.4 8.4L7.1 9.5z" fill="#fff" stroke="#2f3540" stroke-width=".9" stroke-linejoin="round"/><circle cx="7" cy="8" r="1.5" fill="#1e222c"/><ellipse cx="11.4" cy="12.7" rx="2.5" ry="1.5" transform="rotate(42 11.4 12.7)" fill="#fff" stroke="#2f3540" stroke-width="1.2"/><ellipse cx="2.6" cy="12.7" rx="2.5" ry="1.5" transform="rotate(-42 2.6 12.7)" fill="#fff" stroke="#2f3540" stroke-width="1.2"/></svg>
<svg class="a" style="left:556px;top:77px;" width="17" height="17" viewBox="0 0 17 17"><path d="M0.6 13.6V1.4q0-.8.8-.8H8" fill="none" stroke="#2f3540" stroke-width="1.1"/><path d="M0.6 13.6H4.4M8 0.6L9.6 2.2" stroke="#2f3540" stroke-width="1.1"/><defs><linearGradient id="cpg" x1="0" y1="0" x2="1" y2="1"><stop offset="0" stop-color="#c9cdd8"/><stop offset="1" stop-color="#fafafc"/></linearGradient></defs><path d="M4.6 3H11.4L15.4 7V15.4H4.6z" fill="url(#cpg)" stroke="#2f3540" stroke-width="1.1" stroke-linejoin="round"/><path d="M11.4 3V7H15.4" fill="#eef0f4" stroke="#2f3540" stroke-width=".9"/></svg>
<svg class="a" style="left:556px;top:101px;" width="17" height="17" viewBox="0 0 17 17"><rect x="0.6" y="0.6" width="7.4" height="9.4" rx=".8" fill="#f6f6f8" stroke="#333" stroke-width="1"/><rect x="2.2" y="2" width="4.2" height="2" fill="#1f6fd0"/><path d="M2.2 6.6h3M4.4 5.4l1.2 1.2l-1.2 1.2" stroke="#555" stroke-width=".7" fill="none"/><path d="M16 1L16.6 4.2L10.6 10L8.6 8.4z" fill="#e6c27a" stroke="#8a6a30" stroke-width=".7"/><path d="M15.4 1.6L16.4 3.8" stroke="#f0a030" stroke-width="1.6"/><path d="M0.4 15.6Q6 14.4 8.4 8.6L10.8 10.2Q8.4 16 0.4 15.6z" fill="#59606e" stroke="#2a2f3a" stroke-width=".8"/></svg>
<svg class="a" style="left:586px;top:66px;" width="17" height="16" viewBox="0 0 17 16"><rect x="5.4" y="0.6" width="10.6" height="10.2" fill="#a9cdea" stroke="#1464c8" stroke-width="1.1"/><circle cx="5.6" cy="10.2" r="5.1" fill="#fbfbfc" stroke="#333" stroke-width="1.1"/><path d="M5.4 5.1A5.1 5.1 0 0 1 10.7 10.8" fill="none" stroke="#e8141c" stroke-width="1.4"/></svg>
<div class="t" style="left:606.80px;top:68.00px;font-size:11.5px;line-height:15.5px;letter-spacing:0.000px;color:#2a2a3a;transform-origin:0 0;transform:scaleX(0.8789);">Cut</div>
<svg class="a" style="left:632px;top:73px;" width="6" height="4" viewBox="0 0 6 4"><path d="M0 0h5l-2.5 3z" fill="#3a3a3a"/></svg>
<svg class="a" style="left:586px;top:90px;" width="17" height="16" viewBox="0 0 17 16"><rect x="5" y="0.6" width="11" height="10.2" fill="#a9cdea" stroke="#1464c8" stroke-width="1.1"/><circle cx="5.6" cy="10.2" r="5.1" fill="#a9cdea" fill-opacity=".85" stroke="#1464c8" stroke-width="1.1"/><path d="M5.4 5.4V10.6H10.6" fill="none" stroke="#8fbbe0" stroke-width=".8"/></svg>
<div class="t" style="left:607.20px;top:92.00px;font-size:11.5px;line-height:15.5px;letter-spacing:0.000px;color:#2a2a3a;transform-origin:0 0;transform:scaleX(0.8571);">Join</div>
<svg class="a" style="left:634px;top:97px;" width="6" height="4" viewBox="0 0 6 4"><path d="M0 0h5l-2.5 3z" fill="#3a3a3a"/></svg>
<svg class="a" style="left:651px;top:65px;" width="15" height="17" viewBox="0 0 15 17"><path d="M0.6 1L5 2.6Q7.6 4.6 10.2 3L13.6 3.4V13.4L10.6 15.4L0.6 11.4z" fill="#eef0f4" stroke="#2f3540" stroke-width="1" stroke-linejoin="round"/><path d="M10.6 5.6V15.4M10.6 5.6L13.6 3.4" stroke="#2f3540" stroke-width=".9" fill="none"/><path d="M2.6 4.4L8.4 6.4V11.6L2.6 9.6z" fill="#3d8ee0" stroke="#1464c8" stroke-width="1"/><path d="M3.8 6.4L7.2 7.6V9.8L3.8 8.6z" fill="#9fd0f4"/></svg>
<svg class="a" style="left:650px;top:89px;" width="17" height="16" viewBox="0 0 17 16"><circle cx="4" cy="3.8" r="3.2" fill="#fff" stroke="#222" stroke-width="1"/><path d="M1.8 1.6L6.2 6M6.2 1.6L1.8 6" stroke="#222" stroke-width=".9"/><path d="M1.2 8.6V12.4H4.6M3.2 10.6L5 12.4L3.2 14.2" fill="none" stroke="#111" stroke-width="1.2"/><path d="M7.6 9L9.4 7.2H16V13.4L14.2 15.4H7.6z" fill="#e2e5ea" stroke="#2f3540" stroke-width="1" stroke-linejoin="round"/><path d="M7.6 9H14.2V15.4M14.2 9L16 7.2" fill="none" stroke="#2f3540" stroke-width=".8"/></svg>
<svg class="a" style="left:673px;top:96px;" width="6" height="4" viewBox="0 0 6 4"><path d="M0 0h5l-2.5 3z" fill="#3a3a3a"/></svg>
<svg class="a" style="left:692px;top:51px;" width="30" height="32" viewBox="0 0 30 32"><path d="M0.6 0V31" stroke="#111" stroke-width="1.3"/><defs><linearGradient id="alb" x1="0" y1="0" x2="0" y2="1"><stop offset="0" stop-color="#a8cfe8"/><stop offset="1" stop-color="#d4e8f4"/></linearGradient><linearGradient id="alg" x1="0" y1="0" x2="0" y2="1"><stop offset="0" stop-color="#d2d6de"/><stop offset="1" stop-color="#fafafc"/></linearGradient></defs><rect x="2.8" y="3.6" width="10.8" height="10" rx="1.2" fill="url(#alb)" stroke="#1464c8" stroke-width="1.3"/><rect x="2.8" y="16.8" width="26" height="11.8" rx="1" fill="url(#alg)" stroke="#2f3540" stroke-width="1.2"/></svg>
<svg class="a" style="left:692px;top:87px;" width="30" height="30" viewBox="0 0 30 30"><path d="M15 0.4L20.6 6.6H17V11.4H12.8V6.6H9.4zM15 29.6L20.6 23.4H17V18.6H12.8V23.4H9.4zM0.4 15L6.6 9.4V12.8H11.4V17H6.6V20.6zM29.6 15L23.4 9.4V12.8H18.6V17H23.4V20.6z" fill="#2f3540"/><rect x="12.6" y="12.6" width="4.8" height="4.8" fill="#fff" stroke="#2f3540" stroke-width="1.1"/></svg>
<svg class="a" style="left:735px;top:55px;" width="14" height="14" viewBox="0 0 14 14"><path d="M6.6 0V13.4" stroke="#c4c4c4" stroke-width=".9"/><path d="M0.8 1.4L4.6 3V8.6H2.4V11.4H0.8z" fill="#f4f4f4" stroke="#c4c4c4" stroke-width=".9"/><path d="M12.6 1.4L8.6 4.2V9.4L12.6 12.2z" fill="#f0f0f0" stroke="#c4c4c4" stroke-width=".9"/><path d="M8.4 6v6.4l1.4-1.2l1 2.2l1-.4l-1-2.2h1.8z" fill="#fafafa" stroke="#b8b8b8" stroke-width=".7"/></svg>
<svg class="a" style="left:760px;top:53px;" width="16" height="16" viewBox="0 0 16 16"><path d="M6.8 0.6V14.6" stroke="#c4c4c4" stroke-width=".9"/><path d="M0.8 3L4.6 4.6V10.2H2.4V13H0.8z" fill="#f4f4f4" stroke="#c4c4c4" stroke-width=".9"/><path d="M12.2 3L8.8 5.6V11.4" fill="none" stroke="#c4c4c4" stroke-width=".9"/><path d="M7 15.4L7.6 12.6L13 7.2L15 9.2L9.6 14.6z" fill="#f6f6f6" stroke="#bcbcbc" stroke-width=".8"/><path d="M8.4 11.8L10.4 13.8" stroke="#c8c8c8" stroke-width=".7"/></svg>
<svg class="a" style="left:784px;top:56px;" width="16" height="12" viewBox="0 0 16 12"><rect x="0.7" y="4.2" width="13.8" height="3.3" rx="1" fill="#a9d0ec" stroke="#1464c8" stroke-width="1.1"/><path d="M6.5 0V11.6M8.5 0V11.6" stroke="#e8141c" stroke-width=".9" stroke-dasharray="1 1"/></svg>
<svg class="a" style="left:809px;top:56px;" width="16" height="12" viewBox="0 0 16 12"><rect x="0.7" y="4.2" width="3.6" height="3.3" rx=".6" fill="#a9d0ec" stroke="#1464c8" stroke-width="1.1"/><rect x="11" y="4.2" width="3.6" height="3.3" rx=".6" fill="#a9d0ec" stroke="#1464c8" stroke-width="1.1"/><path d="M6.5 0V11.6M8.5 0V11.6" stroke="#e8141c" stroke-width=".9" stroke-dasharray="1 1"/></svg>
<svg class="a" style="left:834px;top:53px;" width="17" height="16" viewBox="0 0 17 16"><path d="M0 5.5H4.3" stroke="#c4c4c4" stroke-width=".9"/><path d="M4.4 0.4H6L7.6 2.6H11V1.4H12.8V8.6H11V7.4H7.6L6 9.6H4.4z" fill="#f8f8f8" stroke="#c4c4c4" stroke-width=".9" stroke-linejoin="round"/><path d="M9.2 2.8V7.2" stroke="#dcdcdc" stroke-width=".8"/><path d="M9.6 8.8L15.4 14.4M15.4 8.8L9.6 14.4" stroke="#bcbcbc" stroke-width="2.2"/><path d="M9.6 8.8L15.4 14.4M15.4 8.8L9.6 14.4" stroke="#f4f4f4" stroke-width=".8"/></svg>
<svg class="a" style="left:834px;top:80px;" width="14" height="11" viewBox="0 0 14 11"><path d="M0 5.5H4.3" stroke="#c4c4c4" stroke-width=".9"/><path d="M4.4 0.4H6L7.6 2.6H11V1.4H12.8V8.6H11V7.4H7.6L6 9.6H4.4z" fill="#f8f8f8" stroke="#c4c4c4" stroke-width=".9" stroke-linejoin="round"/><path d="M9.2 2.8V7.2" stroke="#dcdcdc" stroke-width=".8"/></svg>
<svg class="a" style="left:734px;top:79px;overflow:hidden;" width="17" height="14" viewBox="0 0 17 14"><path d="M0.9 12.3V7Q0.9 5.4 2.6 5.4H4.1V2.4Q4.1 0.5 6 0.5H8.6Q10.5 0.5 10.5 2.4V5.5H16.4M0.9 12.3H16.4" fill="none" stroke="#1464c8" stroke-width="1.3"/><path d="M3 10.5V7.4H6V2.9H8.6V7.4H16.4M3 10.5H16.4" fill="none" stroke="#2a2e38" stroke-width="1.2" stroke-linejoin="round"/></svg>
<svg class="a" style="left:759px;top:76px;" width="16" height="18" viewBox="0 0 16 18"><path d="M12.7 5.9A6.4 6.4 0 1 1 6.4 3.3" fill="none" stroke="#2f3540" stroke-width="1.4"/><path d="M5.4 0.4L9.9 3.3L5.4 6.4z" fill="#2f3540"/></svg>
<svg class="a" style="left:784px;top:77px;" width="16" height="16" viewBox="0 0 16 16"><rect x="0.8" y="0.8" width="3.6" height="3.6" fill="#f6f6f6" stroke="#c4c4c4" stroke-width=".9"/><rect x="8" y="0.8" width="3.6" height="3.6" fill="#f6f6f6" stroke="#c4c4c4" stroke-width=".9"/><rect x="0.8" y="7.8" width="3.6" height="3.6" fill="#f6f6f6" stroke="#c4c4c4" stroke-width=".9"/><path d="M11.4 7.8H8V11" fill="none" stroke="#c4c4c4" stroke-width=".9"/></svg>
<div class="t" style="left:794.40px;top:84.00px;font-size:9px;line-height:13px;letter-spacing:-0.048px;color:#c0c0c0;font-weight:bold;transform-origin:0 0;transform:scaleX(0.8400);">P</div>
<svg class="a" style="left:809px;top:77px;" width="17" height="17" viewBox="0 0 17 17"><defs><linearGradient id="scb" x1="0" y1="0" x2="0" y2="1"><stop offset="0" stop-color="#9cc8e6"/><stop offset="1" stop-color="#cfe6f4"/></linearGradient><linearGradient id="alg2" x1="0" y1="0" x2="0" y2="1"><stop offset="0" stop-color="#cfd3dc"/><stop offset="1" stop-color="#fafafc"/></linearGradient></defs><rect x="0.7" y="0.7" width="14.8" height="14.8" rx="1" fill="url(#scb)" stroke="#1464c8" stroke-width="1.3"/><rect x="0.7" y="7.4" width="8.2" height="8.2" rx=".8" fill="url(#alg2)" stroke="#2f3540" stroke-width="1.2"/></svg>
<svg class="a" style="left:734px;top:101px;" width="17" height="17" viewBox="0 0 17 17"><circle cx="3.8" cy="4" r="3" fill="#f6f6f6" stroke="#c4c4c4" stroke-width=".9"/><circle cx="9.6" cy="10" r="3.2" fill="#f6f6f6" stroke="#c4c4c4" stroke-width=".9"/><circle cx="12" cy="12.4" r="3.2" fill="#f8f8f8" stroke="#c4c4c4" stroke-width=".9"/><path d="M9 2h3.6v3.4M11.4 4.2l1.2 1.4l1.2-1.4" fill="none" stroke="#bdbdbd" stroke-width=".9"/></svg>
<svg class="a" style="left:759px;top:101px;" width="17" height="17" viewBox="0 0 17 17"><path d="M1 2.4H7" stroke="#111" stroke-width="1.1"/><path d="M7.6 2.4l-2.6-2v4z" fill="#111"/><path d="M0.2 6.5H5M0.2 8.5H5" stroke="#222" stroke-width="1"/><path d="M7.5 12V16.4M9.5 12V16.4" stroke="#222" stroke-width="1"/><path d="M5 6.5H9.5V12M5 8.5H7.5V12" fill="none" stroke="#2a8cf0" stroke-width="1"/><path d="M13.6 8.6V16.4" stroke="#111" stroke-width="1.1"/><path d="M13.6 7.4l-2 2.8h4z" fill="#111"/></svg>
<svg class="a" style="left:784px;top:101px;" width="17" height="17" viewBox="0 0 17 17"><path d="M3 2.4H10" stroke="#111" stroke-width="1.1"/><path d="M10.6 2.4l-2.6-2v4z" fill="#111"/><path d="M0.2 8.5H7M0.2 10.5H7" stroke="#222" stroke-width="1"/><path d="M7 8.5H13M7 10.5H13" stroke="#2a8cf0" stroke-width="1"/><path d="M13.2 0.4V16.4M15.6 0.4V16.4" stroke="#222" stroke-width="1.1"/></svg>
<svg class="a" style="left:809px;top:101px;" width="17" height="17" viewBox="0 0 17 17"><path d="M3 2.4H10" stroke="#111" stroke-width="1.1"/><path d="M10.6 2.4l-2.6-2v4z" fill="#111"/><path d="M0.2 6.5H7M0.2 8.5H7M0.2 11.5H7M0.2 13.5H7" stroke="#222" stroke-width="1"/><path d="M7 6.5H13M7 8.5H13M7 11.5H13M7 13.5H13" stroke="#2a8cf0" stroke-width="1"/><path d="M13.2 0.4V16.4M15.6 0.4V16.4" stroke="#222" stroke-width="1.1"/></svg>
<svg class="a" style="left:836px;top:103px;" width="13" height="13" viewBox="0 0 13 13"><path d="M2 2L10.6 10.6M10.6 2L2 10.6" stroke="#a81018" stroke-width="3.8" stroke-linecap="round"/><path d="M2 2L10.6 10.6M10.6 2L2 10.6" stroke="#ee2c34" stroke-width="2.5" stroke-linecap="round"/></svg>
<svg class="a" style="left:864px;top:58px;" width="30" height="18" viewBox="0 0 30 18"><path d="M0.2 4L4.4 0.6V3.2H25V0.6L29.2 4L25 7.4V4.8H4.4V7.4z" fill="#2f3540"/><rect x="0.6" y="12" width="28" height="4.8" rx="1" fill="#f5c020" stroke="#b87c00" stroke-width="1"/><path d="M2.6 12.2v2.4M4.6 12.2v1.6M6.6 12.2v2.4M8.6 12.2v1.6M10.6 12.2v2.4M12.6 12.2v1.6M14.6 12.2v2.4M16.6 12.2v1.6M18.6 12.2v2.4M20.6 12.2v1.6M22.6 12.2v2.4M24.6 12.2v1.6M26.6 12.2v2.4" stroke="#fff0a8" stroke-width=".8"/></svg>
<svg class="a" style="left:901px;top:66px;" width="6" height="4" viewBox="0 0 6 4"><path d="M0 0h5l-2.5 3z" fill="#3a3a3a"/></svg>
<svg class="a" style="left:864px;top:87px;" width="31" height="31" viewBox="0 0 31 31"><path d="M6 23.4L23.8 7" stroke="#2f3540" stroke-width="1.3"/><path d="M4.2 25L5.4 18.8L10.6 24zM25.4 5.4L24.4 11.6L19 6.6z" fill="#2f3540"/><path d="M0.4 21L8.8 29.8M21.2 0.4L30 9" stroke="#2f3540" stroke-width="1.2"/></svg>
<svg class="a" style="left:901px;top:102px;" width="6" height="4" viewBox="0 0 6 4"><path d="M0 0h5l-2.5 3z" fill="#3a3a3a"/></svg>
<svg class="a" style="left:924px;top:52px;" width="28" height="30" viewBox="0 0 28 30"><defs><linearGradient id="epg" x1="0" y1="0" x2="0" y2="1"><stop offset="0" stop-color="#c6cad4"/><stop offset="1" stop-color="#f4f4f8"/></linearGradient></defs><path d="M0.6 0.6H24V28.6H6.4V19.6H0.6z" fill="url(#epg)" stroke="#111" stroke-width="1.1" stroke-dasharray="2 1.6"/><path d="M12.96 25.38L22.14 17.65L24.32 20.25L15.14 27.98z" fill="#f8b80c" stroke="#9a6a10" stroke-width=".6"/><path d="M13.6 26L22.8 18.3" stroke="#fde68a" stroke-width="1"/><path d="M22.14 17.65L24.67 15.53L26.85 18.13L24.32 20.25z" fill="#c0682a" stroke="#7a3a10" stroke-width=".6"/><path d="M11.3 29L12.96 25.38L15.14 27.98z" fill="#fff" stroke="#888" stroke-width=".6"/><path d="M11.3 29l.7-1.5l.9 1.1z" fill="#333"/></svg>
<div class="t" style="left:927.50px;top:87.00px;font-size:11.5px;line-height:15.5px;letter-spacing:0.000px;color:#2a2a3a;transform-origin:0 0;transform:scaleX(0.8667);">Edit</div>
<div class="t" style="left:921.70px;top:100.00px;font-size:11.5px;line-height:15.5px;letter-spacing:0.000px;color:#2a2a3a;transform-origin:0 0;transform:scaleX(0.8939);">Profile</div>
<svg class="a" style="left:973px;top:52px;overflow:hidden;" width="18" height="30" viewBox="0 0 18 30"><path d="M13 2.6Q13 0.8 18 0.8V20H13z" fill="#bfe0f6" stroke="#1464c8" stroke-width="1.2"/><path d="M4.6 10.4Q8.6 8.4 12.6 10.4L15 24.6Q8.6 28 1.4 24.6z" fill="#eaf4fc" stroke="#1464c8" stroke-width="1.3"/><ellipse cx="8.6" cy="10.6" rx="4" ry="1.4" fill="#fff" stroke="#1464c8" stroke-width="1"/><path d="M2 22.6Q8.6 25.6 14.6 22.6" fill="none" stroke="#9cc8ea" stroke-width=".9"/><circle cx="19.6" cy="23.6" r="5.6" fill="#d8ecfa" stroke="#1464c8" stroke-width="1.3"/></svg>
<div class="t" style="left:971.70px;top:87.00px;font-size:11.5px;line-height:15.5px;letter-spacing:0.000px;color:#2a2a3a;transform-origin:0 0;transform:scaleX(0.9800);">Create</div>
<div class="t" style="left:975.80px;top:100.00px;font-size:11.5px;line-height:15.5px;letter-spacing:0.000px;color:#2a2a3a;transform-origin:0 0;transform:scaleX(0.9704);">Form</div>
<div class="a" style="left:319px;top:168px;width:6px;height:518px;background:#d4d0c8;"></div>
<div class="a" style="left:320px;top:189px;width:1px;height:455px;background:#fff;"></div>
<div class="a" style="left:320px;top:671px;width:1px;height:15px;background:#fff;"></div>
<div class="a" style="left:4px;top:168px;width:317px;height:18px;background:#808080;"></div>
<div class="t" style="left:8.30px;top:171.00px;font-size:11.5px;line-height:15.5px;letter-spacing:0.000px;color:#e2ddcf;transform-origin:0 0;transform:scaleX(0.9642);">Properties</div>
<svg class="a" style="left:307px;top:174px;" width="8" height="7" viewBox="0 0 8 7"><path d="M0.6 0L7.4 7M7.4 0L0.6 7" stroke="#fff" stroke-width="1.6" fill="none"/></svg>
<div class="a" style="left:4px;top:186px;width:317px;height:3px;background:#d4d0c8;"></div>
<div class="a" style="left:5px;top:189px;width:315px;height:455px;background:#fff;border-top:1px solid #404040;border-left:1px solid #404040;"></div>
<div class="a" style="left:6px;top:190px;width:313px;height:72px;background:linear-gradient(#ffffff 0%,#fbfbfb 35%,#e6e6e6 100%);"></div>
<div class="a" style="left:9px;top:193px;width:66px;height:66px;background:linear-gradient(#0000 0%,#0000 70%,#d0d0d055 100%),linear-gradient(100deg,#d6d6d6 0%,#e6e6e6 40%,#f5f5f5 75%,#ececec 100%);border:1px solid #eeeeee;"></div>
<div class="a" style="left:10px;top:236px;width:64px;height:22px;background:linear-gradient(#e6e6e600 0%,#e0e0e0cc 35%,#d8d8d8 100%);"></div>
<svg class="a" style="left:9px;top:193px;" width="66" height="66" viewBox="0 0 66 66"><path d="M31.8 5L41.8 18.8L41.2 24.9L37.3 27.1L50.6 43.8L47.9 48.2L25.2 36.6L22.4 48.8L15.2 47.6L20.2 11.1z" fill="#cbcbcb"/><path d="M31.8 5L41.8 18.8L41.2 24.9L37.3 27.1L30 16z" fill="#d0d0d0"/><path d="M20.2 11.1L31.8 5L30 16L37.3 27.1L26 32L17.5 30z" fill="#c4c4c4"/><path d="M17.5 30L26 32L22.4 48.8L15.2 47.6z" fill="#cacaca"/><path d="M26 32L37.3 27.1L50.6 43.8L47.9 48.2L25.2 36.6z" fill="#cdcdcd"/></svg>
<svg class="a" style="left:309px;top:225px;" width="8" height="4" viewBox="0 0 8 4"><path d="M0 0h8l-4 4z" fill="#a6a6a6"/></svg>
<div class="a" style="left:6px;top:262px;width:313px;height:23px;background:#d4d0c8;"></div>
<div class="a" style="left:7px;top:264px;width:228px;height:19px;background:#fff;border:1px solid;border-color:#808080 #fff #fff #808080;"></div>
<div class="a" style="left:8px;top:265px;width:226px;height:17px;background:#fff;border:1px solid;border-color:#404040 #d4d0c8 #d4d0c8 #404040;"></div>
<div class="t" style="left:10.50px;top:267.00px;font-size:11.5px;line-height:15.5px;letter-spacing:0.000px;color:#000;transform-origin:0 0;transform:scaleX(0.9674);">Other (1)</div>
<div class="a" style="left:218px;top:266px;width:16px;height:15px;background:#d4d0c8;border:1px solid;border-color:#fff #404040 #404040 #fff;"></div>
<div class="a" style="left:219px;top:267px;width:14px;height:13px;background:#d4d0c8;border:1px solid;border-color:#d4d0c8 #808080 #808080 #d4d0c8;"></div>
<svg class="a" style="left:222px;top:271px;" width="8" height="4" viewBox="0 0 8 4"><path d="M0.5 0h7l-3.5 4z" fill="#000"/></svg>
<svg class="a" style="left:243px;top:265px;" width="16" height="16" viewBox="0 0 16 16"><g fill="#fff"><rect x="0" y="0" width="5" height="7"/><rect x="0" y="9" width="5" height="6"/><rect x="7" y="3" width="8" height="12"/><path d="M6 0h9v2h-1v-1h-7v2h-1z"/><rect x="5" y="9" width="2" height="1"/></g></svg>
<svg class="a" style="left:242px;top:264px;" width="16" height="16" viewBox="0 0 16 16"><g fill="#808080"><rect x="0" y="0" width="5" height="7"/><rect x="0" y="9" width="5" height="6"/><rect x="7" y="3" width="8" height="12"/><path d="M6 0h9v2h-1v-1h-7v2h-1z"/><rect x="5" y="9" width="2" height="1"/></g></svg>
<div class="t" style="left:263.90px;top:266.00px;font-size:11.5px;line-height:15.5px;letter-spacing:0.000px;color:#fff;font-weight:bold;transform-origin:0 0;transform:scaleX(0.9365);text-shadow:.6px 0 0 #fff;">Edit Type</div>
<div class="t" style="left:262.90px;top:265.00px;font-size:11.5px;line-height:15.5px;letter-spacing:0.000px;color:#808080;font-weight:bold;transform-origin:0 0;transform:scaleX(0.9365);text-shadow:.6px 0 0 #808080;">Edit Type</div>
<div class="a" style="left:6px;top:285px;width:313px;height:15px;background:#dcdcdc;"></div>
<div class="t" style="left:7.80px;top:285.00px;font-size:11.5px;line-height:15.5px;letter-spacing:0.000px;color:#000;transform-origin:0 0;transform:scaleX(0.8848);">Graphics</div>
<svg class="a" style="left:307px;top:289px;" width="6" height="8" viewBox="0 0 6 8"><path d="M0.7 3.4L3 1L5.3 3.4M0.7 7.4L3 5L5.3 7.4" stroke="#000" stroke-width="1.5" fill="none"/></svg>
<div class="a" style="left:6px;top:330px;width:313px;height:15px;background:#dcdcdc;"></div>
<div class="t" style="left:7.80px;top:330.00px;font-size:11.5px;line-height:15.5px;letter-spacing:0.000px;color:#000;transform-origin:0 0;transform:scaleX(0.9061);">Materials and Finishes</div>
<svg class="a" style="left:307px;top:334px;" width="6" height="8" viewBox="0 0 6 8"><path d="M0.7 3.4L3 1L5.3 3.4M0.7 7.4L3 5L5.3 7.4" stroke="#000" stroke-width="1.5" fill="none"/></svg>
<div class="a" style="left:6px;top:360px;width:313px;height:15px;background:#dcdcdc;"></div>
<div class="t" style="left:7.80px;top:360.00px;font-size:11.5px;line-height:15.5px;letter-spacing:0.000px;color:#000;transform-origin:0 0;transform:scaleX(0.9723);">Identity Data</div>
<svg class="a" style="left:307px;top:364px;" width="6" height="8" viewBox="0 0 6 8"><path d="M0.7 3.4L3 1L5.3 3.4M0.7 7.4L3 5L5.3 7.4" stroke="#000" stroke-width="1.5" fill="none"/></svg>
<div class="t" style="left:13.80px;top:300.00px;font-size:11.5px;line-height:15.5px;letter-spacing:-0.071px;color:#000;transform-origin:0 0;transform:scaleX(0.8400);">Visible</div>
<div class="a" style="left:6px;top:314px;width:313px;height:1px;background:transparent;background-image:linear-gradient(90deg,#9a9a9a 50%,transparent 50%);background-size:2px 1px;"></div>
<div class="a" style="left:156px;top:300px;width:1px;height:15px;background:transparent;background-image:linear-gradient(#9a9a9a 50%,transparent 50%);background-size:1px 2px;"></div>
<div class="a" style="left:306px;top:300px;width:1px;height:15px;background:transparent;background-image:linear-gradient(#9a9a9a 50%,transparent 50%);background-size:1px 2px;"></div>
<div class="a" style="left:318px;top:300px;width:1px;height:15px;background:transparent;background-image:linear-gradient(#9a9a9a 50%,transparent 50%);background-size:1px 2px;"></div>
<div class="t" style="left:13.80px;top:315.00px;font-size:11.5px;line-height:15.5px;letter-spacing:0.000px;color:#000;transform-origin:0 0;transform:scaleX(0.9146);">Visibility/Graphics Overrides</div>
<div class="a" style="left:6px;top:329px;width:313px;height:1px;background:transparent;background-image:linear-gradient(90deg,#9a9a9a 50%,transparent 50%);background-size:2px 1px;"></div>
<div class="a" style="left:156px;top:315px;width:1px;height:15px;background:transparent;background-image:linear-gradient(#9a9a9a 50%,transparent 50%);background-size:1px 2px;"></div>
<div class="a" style="left:306px;top:315px;width:1px;height:15px;background:transparent;background-image:linear-gradient(#9a9a9a 50%,transparent 50%);background-size:1px 2px;"></div>
<div class="a" style="left:318px;top:315px;width:1px;height:15px;background:transparent;background-image:linear-gradient(#9a9a9a 50%,transparent 50%);background-size:1px 2px;"></div>
<div class="t" style="left:13.80px;top:345.00px;font-size:11.5px;line-height:15.5px;letter-spacing:0.000px;color:#000;transform-origin:0 0;transform:scaleX(0.9073);">Material</div>
<div class="a" style="left:6px;top:359px;width:313px;height:1px;background:transparent;background-image:linear-gradient(90deg,#9a9a9a 50%,transparent 50%);background-size:2px 1px;"></div>
<div class="a" style="left:156px;top:345px;width:1px;height:15px;background:transparent;background-image:linear-gradient(#9a9a9a 50%,transparent 50%);background-size:1px 2px;"></div>
<div class="a" style="left:306px;top:345px;width:1px;height:15px;background:transparent;background-image:linear-gradient(#9a9a9a 50%,transparent 50%);background-size:1px 2px;"></div>
<div class="a" style="left:318px;top:345px;width:1px;height:15px;background:transparent;background-image:linear-gradient(#9a9a9a 50%,transparent 50%);background-size:1px 2px;"></div>
<div class="t" style="left:13.80px;top:375.00px;font-size:11.5px;line-height:15.5px;letter-spacing:0.000px;color:#000;transform-origin:0 0;transform:scaleX(0.9246);">Subcategory</div>
<div class="a" style="left:6px;top:389px;width:313px;height:1px;background:transparent;background-image:linear-gradient(90deg,#9a9a9a 50%,transparent 50%);background-size:2px 1px;"></div>
<div class="a" style="left:156px;top:375px;width:1px;height:15px;background:transparent;background-image:linear-gradient(#9a9a9a 50%,transparent 50%);background-size:1px 2px;"></div>
<div class="a" style="left:306px;top:375px;width:1px;height:15px;background:transparent;background-image:linear-gradient(#9a9a9a 50%,transparent 50%);background-size:1px 2px;"></div>
<div class="a" style="left:318px;top:375px;width:1px;height:15px;background:transparent;background-image:linear-gradient(#9a9a9a 50%,transparent 50%);background-size:1px 2px;"></div>
<div class="t" style="left:13.80px;top:390.00px;font-size:11.5px;line-height:15.5px;letter-spacing:0.000px;color:#000;transform-origin:0 0;transform:scaleX(0.8863);">Solid/Void</div>
<div class="a" style="left:6px;top:404px;width:313px;height:1px;background:transparent;background-image:linear-gradient(90deg,#9a9a9a 50%,transparent 50%);background-size:2px 1px;"></div>
<div class="a" style="left:156px;top:390px;width:1px;height:15px;background:transparent;background-image:linear-gradient(#9a9a9a 50%,transparent 50%);background-size:1px 2px;"></div>
<div class="a" style="left:306px;top:390px;width:1px;height:15px;background:transparent;background-image:linear-gradient(#9a9a9a 50%,transparent 50%);background-size:1px 2px;"></div>
<div class="a" style="left:318px;top:390px;width:1px;height:15px;background:transparent;background-image:linear-gradient(#9a9a9a 50%,transparent 50%);background-size:1px 2px;"></div>
<div class="a" style="left:157px;top:300px;width:149px;height:14px;background:#fff;border:1px solid #000;"></div>
<div class="a" style="left:160px;top:301px;width:13px;height:13px;background:#fff;border:1px solid;border-color:#808080 #fff #fff #808080;"></div>
<div class="a" style="left:161px;top:302px;width:11px;height:11px;background:#fff;border:1px solid;border-color:#404040 #d4d0c8 #d4d0c8 #404040;"></div>
<svg class="a" style="left:163px;top:304px;overflow:hidden;" width="7" height="7" viewBox="0 0 7 7"><path d="M0 2L0 5L2.5 7.5L7 3L7 0L2.5 4.5z" fill="#000"/></svg>
<div class="a" style="left:157px;top:313px;width:149px;height:1px;background:#000;"></div>
<div class="a" style="left:307px;top:300px;width:11px;height:14px;background:#d4d0c8;border:1px solid;border-color:#fff #404040 #404040 #fff;"></div>
<div class="a" style="left:308px;top:301px;width:9px;height:12px;background:#d4d0c8;border:1px solid;border-color:#d4d0c8 #808080 #808080 #d4d0c8;"></div>
<div class="a" style="left:307px;top:345px;width:11px;height:14px;background:#d4d0c8;border:1px solid;border-color:#fff #404040 #404040 #fff;"></div>
<div class="a" style="left:308px;top:346px;width:9px;height:12px;background:#d4d0c8;border:1px solid;border-color:#d4d0c8 #808080 #808080 #d4d0c8;"></div>
<div class="a" style="left:157px;top:316px;width:149px;height:13px;background:#d4d0c8;border:1px solid;border-color:#fff #404040 #404040 #fff;"></div>
<div class="a" style="left:158px;top:317px;width:147px;height:11px;background:#d4d0c8;border:1px solid;border-color:#d4d0c8 #808080 #808080 #d4d0c8;"></div>
<div class="t" style="left:216.00px;top:316.00px;font-size:11.5px;line-height:15.5px;letter-spacing:0.000px;color:#000;transform-origin:0 0;transform:scaleX(0.9655);">Edit...</div>
<div class="t" style="left:159.50px;top:345.00px;font-size:11.5px;line-height:15.5px;letter-spacing:0.000px;color:#000;transform-origin:0 0;transform:scaleX(0.9714);">&lt;By Category&gt;</div>
<div class="t" style="left:158.60px;top:375.00px;font-size:11.5px;line-height:15.5px;letter-spacing:0.000px;color:#000;transform-origin:0 0;transform:scaleX(0.8714);">None</div>
<div class="t" style="left:158.60px;top:390.00px;font-size:11.5px;line-height:15.5px;letter-spacing:-0.042px;color:#000;transform-origin:0 0;transform:scaleX(0.8400);">Solid</div>
<div class="a" style="left:6px;top:618px;width:314px;height:26px;background:#d4d0c8;"></div>
<div class="a" style="left:5px;top:644px;width:1px;height:1px;background:#d4d0c8;"></div>
<div class="a" style="left:4px;top:645px;width:317px;height:1px;background:#fff;"></div>
<div class="t" style="left:8.30px;top:623.00px;font-size:11.5px;line-height:15.5px;letter-spacing:0.000px;color:#00009c;transform-origin:0 0;transform:scaleX(0.9910);">Properties help</div>
<div class="a" style="left:8px;top:635px;width:78px;height:1px;background:#00009c;"></div>
<div class="a" style="left:243px;top:620px;width:75px;height:23px;background:#d4d0c8;border:1px solid #000;"></div>
<div class="a" style="left:244px;top:621px;width:73px;height:21px;background:#d4d0c8;border:1px solid;border-color:#fff #404040 #404040 #fff;"></div>
<div class="a" style="left:245px;top:622px;width:71px;height:19px;background:#d4d0c8;border:1px solid;border-color:#d4d0c8 #808080 #808080 #d4d0c8;"></div>
<div class="t" style="left:265.70px;top:625.00px;font-size:11.5px;line-height:15.5px;letter-spacing:0.000px;color:#fff;transform-origin:0 0;transform:scaleX(1.0448);">Apply</div>
<div class="t" style="left:264.70px;top:624.00px;font-size:11.5px;line-height:15.5px;letter-spacing:0.000px;color:#808080;transform-origin:0 0;transform:scaleX(1.0448);">Apply</div>
<div class="a" style="left:4px;top:650px;width:317px;height:18px;background:#808080;"></div>
<div class="t" style="left:8.30px;top:653.00px;font-size:11.5px;line-height:15.5px;letter-spacing:0.000px;color:#e2ddcf;transform-origin:0 0;transform:scaleX(0.9598);">Project Browser - Family1</div>
<svg class="a" style="left:307px;top:656px;" width="8" height="7" viewBox="0 0 8 7"><path d="M0.6 0L7.4 7M7.4 0L0.6 7" stroke="#fff" stroke-width="1.6" fill="none"/></svg>
<div class="a" style="left:5px;top:671px;width:315px;height:20px;background:#fff;border-top:1px solid #404040;border-left:1px solid #404040;"></div>
<div class="a" style="left:11px;top:676px;width:9px;height:9px;background:#fff;border:1px solid #808080;"></div>
<div class="a" style="left:13px;top:680px;width:5px;height:1px;background:#000;"></div>
<div class="a" style="left:21px;top:680px;width:5px;height:1px;background:transparent;background-image:linear-gradient(90deg,#808080 50%,transparent 50%);background-size:2px 1px;"></div>
<svg class="a" style="left:27px;top:672px;" width="15" height="14" viewBox="0 0 15 14"><path d="M0.5 4V1.5h3M11 1.5h3V4M0.5 11v3M14 11v3" stroke="#333" fill="none"/><path d="M3.5 5.5q0-1.5 2-1.5h6l-1 7q-.3 1.5-2 1.5h-4q-1.5 0-1.3-1.5z" fill="#e4e6ee" stroke="#333"/></svg>
<div class="t" style="left:48.20px;top:672.00px;font-size:11.5px;line-height:15.5px;letter-spacing:0.000px;color:#000;transform-origin:0 0;transform:scaleX(0.9887);">Views (all)</div>
<div class="a" style="left:321px;top:168px;width:4px;height:518px;background:#d4d0c8;"></div>
<div class="a" style="left:325px;top:168px;width:666px;height:1px;background:#d4d0c8;"></div>
<div class="a" style="left:325px;top:169px;width:1px;height:517px;background:#9a9690;"></div>
<div class="a" style="left:326px;top:169px;width:1px;height:517px;background:#404040;"></div>
<div class="a" style="left:326px;top:169px;width:665px;height:1px;background:#404040;"></div>
<div class="a" style="left:327px;top:170px;width:664px;height:516px;background:#fff;"></div>
<svg class="a" style="left:327px;top:170px;overflow:hidden;" width="664" height="516" viewBox="0 0 664 516"><circle cx="239.5" cy="158.5" r="5.9" fill="#000"/><circle cx="460.5" cy="158.5" r="5.9" fill="#000"/><circle cx="239.5" cy="379.5" r="5.9" fill="#000"/><circle cx="460.5" cy="379.5" r="5.9" fill="#000"/><rect x="17" y="0" width="1" height="516" fill="#088bc8"/><rect x="239" y="0" width="1" height="516" fill="#088bc8"/><rect x="460" y="0" width="1" height="516" fill="#088bc8"/><rect x="17" y="158" width="647" height="1" fill="#088bc8"/><rect x="17" y="379" width="647" height="1" fill="#088bc8"/><rect x="221.5" y="140.5" width="35" height="35" fill="none" stroke="#088bc8" stroke-width="1"/><rect x="443.5" y="140.5" width="35" height="35" fill="none" stroke="#088bc8" stroke-width="1"/><rect x="221.5" y="362.5" width="35" height="35" fill="none" stroke="#088bc8" stroke-width="1"/><rect x="443.5" y="362.5" width="35" height="35" fill="none" stroke="#088bc8" stroke-width="1"/><rect x="239" y="158" width="222" height="222" fill="#4f78d4" fill-opacity="0.72"/><rect x="238.5" y="157.5" width="223" height="223" fill="none" stroke="#0b8400" stroke-width="1"/><rect x="239.5" y="158.5" width="221" height="221" fill="none" stroke="#1c3fc8" stroke-width="1"/><rect x="349" y="226" width="2" height="33" fill="#0a5a12"/><path d="M350 204L354.6 226H345.4z" fill="#33cc55" stroke="#2a4a3a" stroke-width="0.9"/><path d="M325.5 261.5V244.5H342.5V247H328V261.5z" fill="#2a46ea" stroke="#27306e" stroke-width="0.9"/><rect x="307" y="268" width="33" height="2" fill="#5e0a14"/><path d="M285 269L307 264.4V273.6z" fill="#d9405c" stroke="#4a2a3a" stroke-width="0.9"/></svg>
</body>
</html>
